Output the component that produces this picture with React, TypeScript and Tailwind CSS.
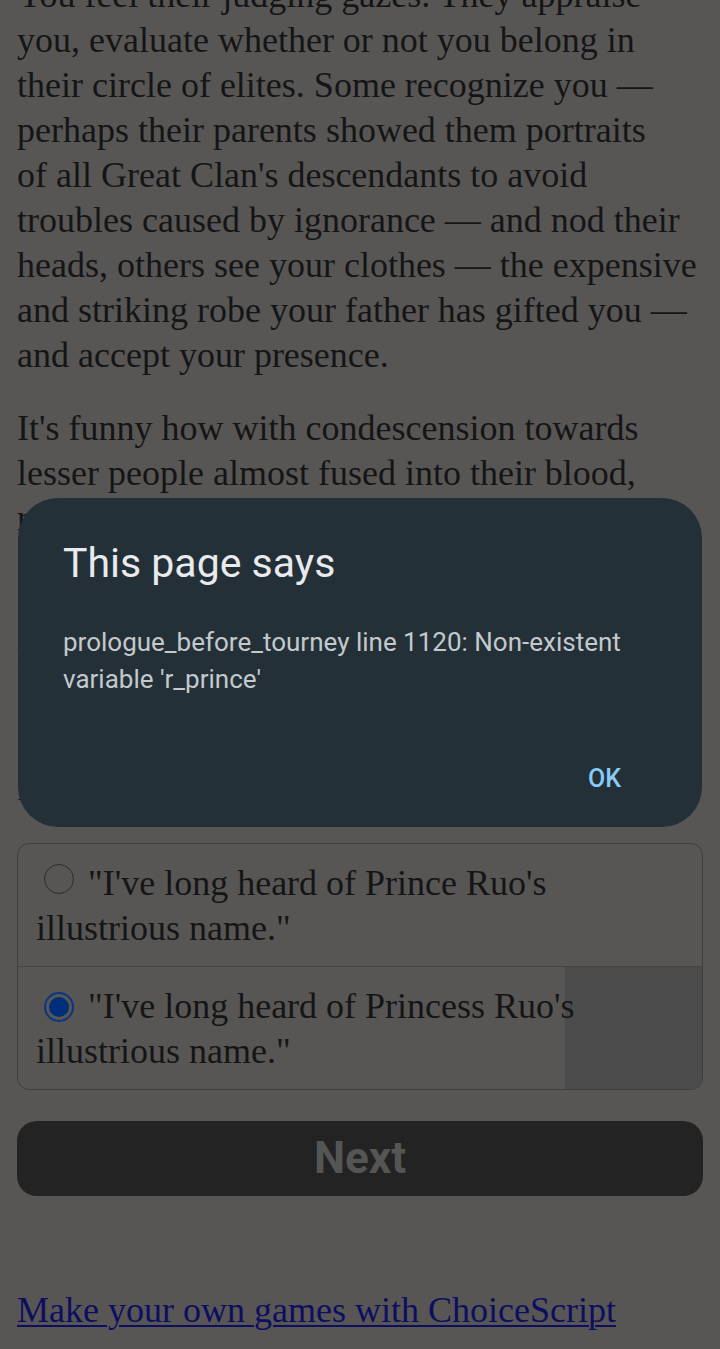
import React from 'react';

// line breaks follow the original page's wrapping
const intro = [
  'You feel their judging gazes. They appraise',
  'you, evaluate whether or not you belong in',
  'their circle of elites. Some recognize you —',
  'perhaps their parents showed them portraits',
  "of all Great Clan's descendants to avoid",
  'troubles caused by ignorance — and nod their',
  'heads, others see your clothes — the expensive',
  'and striking robe your father has gifted you —',
  'and accept your presence.',
];

const funny = [
  "It's funny how with condescension towards",
  'lesser people almost fused into their blood,',
  'rarely would any of them spare a glance at',
  'a commoner, yet they flock to anyone whose',
  'crest carries weight. You watch them drift',
  'meekly from one noble heir to the next,',
  'each word weighed, each smile measured,',
  'as a young man steps out of the crowd.',
  'In a smooth voice, he asks your name.',
];

const choices = [
  { id: 'prince', label: '"I\'ve long heard of Prince Ruo\'s illustrious name."', checked: false },
  { id: 'princess', label: '"I\'ve long heard of Princess Ruo\'s illustrious name."', checked: true },
];

function Lines({ lines }: { lines: string[] }) {
  return (
    <>
      {lines.map((line, i) => (
        <React.Fragment key={i}>
          {line}
          {i < lines.length - 1 && <br />}
        </React.Fragment>
      ))}
    </>
  );
}

function Radio({ checked }: { checked: boolean }) {
  if (checked) {
    return (
      <span className="ml-[8px] mr-[14px] inline-flex h-[30px] w-[30px] items-center justify-center rounded-full border-2 border-[#0a3580] align-[1px]">
        <span className="h-[20px] w-[20px] rounded-full bg-[#002e78]" />
      </span>
    );
  }
  return (
    <span className="ml-[8px] mr-[14px] inline-block h-[30px] w-[30px] rounded-full border-[1.5px] border-[#2c2c2c] align-[1px]" />
  );
}

export default function App() {
  return (
    <div className="relative min-h-[1349px] overflow-hidden bg-[#575655] font-['Liberation_Serif',serif] text-[36px] leading-[45px] text-[#151515]">
      <div className="-mt-[27px] px-[17px]">
        <p className="mb-7 whitespace-nowrap">
          <Lines lines={intro} />
        </p>
        <p className="whitespace-nowrap">
          <Lines lines={funny} />
        </p>

        <div className="mt-[32px] overflow-hidden rounded-[12px] border border-[#403f3e]">
          {choices.map((choice, i) => (
            <div
              key={choice.id}
              className={
                i === 0
                  ? 'border-b border-[#454443] pt-[17px] pb-[15px] pl-[18px] pr-[18px]'
                  : 'bg-[linear-gradient(to_right,transparent_547px,#4b4b4b_547px)] pt-[17px] pb-[15px] pl-[18px] pr-[18px]'
              }
            >
              <Radio checked={choice.checked} />
              {choice.label}
            </div>
          ))}
        </div>

        <button className="mt-[31px] flex h-[75px] w-full items-center justify-center rounded-[20px] bg-[#232323] font-['Roboto',sans-serif] text-[44px] font-bold text-[#555555]">
          Next
        </button>

        <p className="mt-[92px]">
          <a href="#" className="text-[#0e0e60] underline decoration-2 underline-offset-[3px]">
            Make your own games with ChoiceScript
          </a>
        </p>
      </div>

      <div className="absolute left-[18px] right-[18px] top-[498px] rounded-[40px] bg-[#243037] pt-[41px] pr-[45px] pb-[33px] pl-[45px] font-['Roboto',sans-serif]">
        <h2 className="text-[41px] leading-[48px] text-[#e8eaed]">This page says</h2>
        <p className="mt-[37px] text-[26px] leading-[37px] text-[#c3c9cd]">
          prologue_before_tourney line 1120: Non-existent variable 'r_prince'
        </p>
        <div className="mt-[66px] flex justify-end">
          <button className="mr-[36px] text-[25px] leading-[30px] font-medium text-[#85cdf6]">OK</button>
        </div>
      </div>
    </div>
  );
}
